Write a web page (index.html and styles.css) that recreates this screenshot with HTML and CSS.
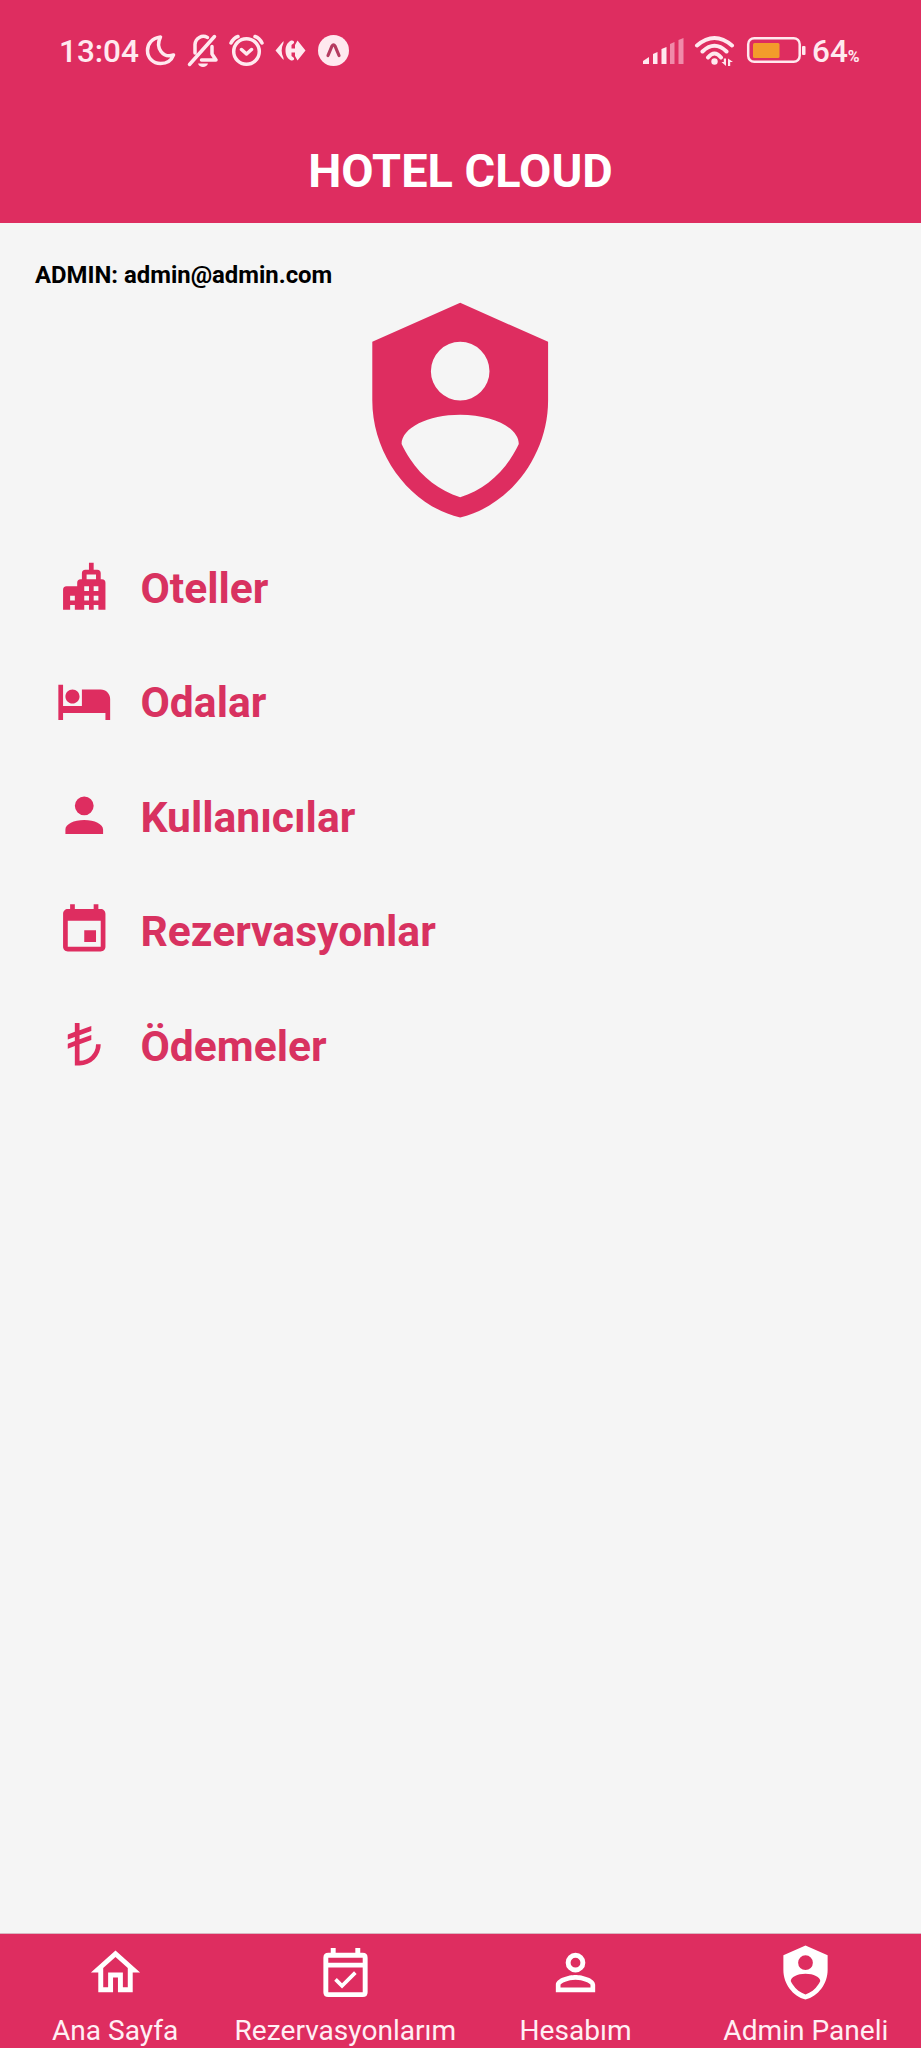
FILE: index.html
```html
<!DOCTYPE html>
<html lang="tr">
<head>
<meta charset="utf-8">
<title>Hotel Cloud</title>
<link rel="stylesheet" href="styles.css">
</head>
<body>
<div class="app">
  <header class="header">
    <div class="status">
      <div class="status-left">
        <span class="time">13:04</span>
        <svg width="210" height="40" viewBox="142 30 210 40">
          <path class="line" d="M160.500 37C152 38 147.500 44 147.500 50.500C147.500 58 153 63.500 160.500 63.500C166.500 63.500 171.500 60.500 173.500 55C163 58.500 155 48 160.500 37Z"/>
          <path class="line" d="M189.500 64.500L214.500 36.500M207.500 37.500C202 34.500 195.500 38 195 44.500V53M201.500 60H216L212 54V46.500"/>
          <path class="solid" d="M198 63.500H208C207 68 199 68 198 63.500Z"/>
          <circle class="line" cx="246.500" cy="51.500" r="12.800"/>
          <path class="line" d="M241.500 49.500L246.500 54L251.500 49.500M231 43C232.500 40 235 37.500 238 36.500M262 43C260.500 40 258 37.500 255 36.500"/>
          <path class="solid" d="M283.500 41L275.500 50.500L283.500 60V58C281 53 281 48 283.500 43Z"/>
          <path class="solid" d="M291 40.500C286.500 43 285.500 47 285.500 50.500C285.500 54 286.500 58 291 60.500C293.500 61 294.500 59.500 294 58L291.500 56V52.500H295V56L297.500 60.500L305.500 50.500L297.500 40.500L295 45V48.500H291.500V45L294 43C294.500 41.500 293.500 40 291 40.500Z"/>
          <circle class="solid" cx="333.500" cy="50.500" r="15.500"/>
          <path class="expo" d="M328 55.500L332 46Q333.500 43.500 335 46L339 55.500"/>
        </svg>
      </div>
      <div class="status-right">
        <svg width="170" height="40" viewBox="640 30 170 40">
          <path class="solid" d="M644 64V61L650 57V64ZM654 64V54L658.500 52V64ZM662.500 64V49L667.500 47V64Z"/>
          <path class="dim" d="M671 64V44L675.500 42V64ZM679.500 64V40L684.500 38V64Z"/>
          <path class="wifi" d="M698 45.500Q715.500 30.500 733 45.500M703.500 51.500Q715.500 40 727.500 51.500M709 57.500Q715.500 49.500 722 57.500"/>
          <circle class="solid" cx="715.500" cy="61.500" r="3.200"/>
          <path class="solid" d="M727 58.500V66L722.500 62H724.800V58.500ZM729 58.500L734 62H731.200V66H729Z"/>
          <rect class="battery" x="749.200" y="38.200" width="51.500" height="23.600" rx="6"/>
          <rect class="charge" x="754" y="43" width="26.500" height="15" rx="1.500"/>
          <rect class="solid" x="803" y="46" width="3.500" height="9" rx="1"/>
        </svg>
        <span class="percent">64<small class="unit">%</small></span>
      </div>
    </div>
    <h1 class="title">HOTEL CLOUD</h1>
  </header>

  <main class="content">
    <p class="admin">ADMIN: admin@admin.com</p>
    <svg class="shield" viewBox="0 0 24 24"><path d="M12,1L3,5V11C3,16.55 6.84,21.74 12,23C17.16,21.74 21,16.55 21,11V5L12,1M12,5A3,3 0 0,1 15,8A3,3 0 0,1 12,11A3,3 0 0,1 9,8A3,3 0 0,1 12,5M17.13,17C15.92,18.85 14.11,20.24 12,20.92C9.89,20.24 8.08,18.85 6.87,17C6.53,16.5 6.24,16 6,15.47C6,13.82 8.71,12.47 12,12.47C15.29,12.47 18,13.79 18,15.47C17.76,16 17.47,16.5 17.13,17Z"/></svg>
    <nav class="menu">
      <a class="item"><svg class="icon" viewBox="0 0 24 24"><path fill-rule="evenodd" d="M14 2H16V5H17.500Q19 5 19 6.500V9H19.500Q21 9 21 10.500V22H18V20H16V22H14V20H12V22H8V20H6V22H3V13.500Q3 12 4.500 12H9V10.500Q9 9 10.500 9H11V6.500Q11 5 12.500 5H14ZM13 7V9H17V7ZM12 12V14H14V12ZM16 12V14H18V12ZM12 16V18H14V16ZM16 16V18H18V16ZM6 16V18H8V16Z"/></svg><span>Oteller</span></a>
      <a class="item"><svg class="icon" viewBox="0 0 24 24"><path d="M7 13c1.660 0 3-1.340 3-3S8.660 7 7 7s-3 1.340-3 3 1.340 3 3 3zm12-6h-8v7H3V5H1v15h2v-3h18v3h2v-9c0-2.210-1.790-4-4-4z"/></svg><span>Odalar</span></a>
      <a class="item"><svg class="icon" viewBox="0 0 24 24"><path d="M12,4A4,4 0 0,1 16,8A4,4 0 0,1 12,12A4,4 0 0,1 8,8A4,4 0 0,1 12,4M12,14C16.42,14 20,15.79 20,18V20H4V18C4,15.79 7.58,14 12,14Z"/></svg><span>Kullanıcılar</span></a>
      <a class="item"><svg class="icon" viewBox="0 0 24 24"><path d="M17 12h-5v5h5v-5zM16 1v2H8V1H6v2H5c-1.110 0-1.990.9-1.990 2L3 19c0 1.100.89 2 2 2h14c1.100 0 2-.9 2-2V5c0-1.100-.9-2-2-2h-1V1h-2zm3 18H5V8h14v11z"/></svg><span>Rezervasyonlar</span></a>
      <a class="item"><svg class="icon" viewBox="0 0 24 24"><path d="M19,12A9,9 0 0,1 10,21H8V12.77L5,13.87V11.74L8,10.64V8.87L5,9.96V7.84L8,6.74V3H10V6L15,4.2V6.32L10,8.14V9.92L15,8.1V10.23L10,12.05V19A7,7 0 0,0 17,12H19Z"/></svg><span>Ödemeler</span></a>
    </nav>
  </main>

  <nav class="tabs">
    <a class="tab"><svg class="tab-icon" viewBox="0 0 24 24"><path d="M12 5.690L17 10.190V18H15V12H9V18H7V10.190L12 5.690M12 3L2 12H5V20H11V14H13V20H19V12H22L12 3Z"/></svg><span>Ana Sayfa</span></a>
    <a class="tab"><svg class="tab-icon" viewBox="0 0 24 24"><path fill-rule="evenodd" d="M6 2H8V4H16V2H18V4H19Q21 4 21 6V20Q21 22 19 22H5Q3 22 3 20V6Q3 4 5 4H6ZM5 6V8H19V6ZM5 10V20H19V10ZM16.530 12.560L15.470 11.500L10.590 16.380L8.470 14.260L7.410 15.320L10.590 18.500Z"/></svg><span>Rezervasyonlarım</span></a>
    <a class="tab"><svg class="tab-icon" viewBox="0 0 24 24"><path d="M12,4A4,4 0 0,1 16,8A4,4 0 0,1 12,12A4,4 0 0,1 8,8A4,4 0 0,1 12,4M12,6A2,2 0 0,0 10,8A2,2 0 0,0 12,10A2,2 0 0,0 14,8A2,2 0 0,0 12,6M12,13C14.67,13 20,14.33 20,17V20H4V17C4,14.33 9.33,13 12,13M12,14.9C9.03,14.9 5.9,16.36 5.9,17V18.1H18.1V17C18.1,16.36 14.97,14.9 12,14.9Z"/></svg><span>Hesabım</span></a>
    <a class="tab"><svg class="tab-icon" viewBox="0 0 24 24"><path d="M12,1L3,5V11C3,16.55 6.84,21.74 12,23C17.16,21.74 21,16.55 21,11V5L12,1M12,5A3,3 0 0,1 15,8A3,3 0 0,1 12,11A3,3 0 0,1 9,8A3,3 0 0,1 12,5M17.13,17C15.92,18.85 14.11,20.24 12,20.92C9.89,20.24 8.08,18.85 6.87,17C6.53,16.5 6.24,16 6,15.47C6,13.82 8.71,12.47 12,12.47C15.29,12.47 18,13.79 18,15.47C17.76,16 17.47,16.5 17.13,17Z"/></svg><span>Admin Paneli</span></a>
  </nav>
</div>
</body>
</html>
```
FILE: styles.css
```css
* { box-sizing: border-box; }
body { margin: 0; font-family: Roboto, "Liberation Sans", sans-serif; background: #f5f5f5; }
svg { display: block; flex: none; }
.app { display: flex; flex-direction: column; height: 2048px; overflow: hidden; }

.header { height: 222.500px; background: #de2d60; flex: none; }
.status { display: flex; justify-content: space-between; height: 100px; padding: 30px 60px 0 59px; color: #ffe9ef; }
.status-left, .status-right { display: flex; align-items: flex-start; height: 40px; }
.time { width: 83px; font-size: 31.5px; line-height: 43px; font-weight: 500; white-space: nowrap; }
.percent { width: 52px; padding-left: 3px; font-size: 31.5px; line-height: 43px; font-weight: 500; white-space: nowrap; }
.unit { font-size: 16px; font-weight: 700; }
.line { fill: none; stroke: #ffe9ef; stroke-width: 3.500; stroke-linecap: round; stroke-linejoin: round; }
.solid { fill: #ffe9ef; }
.dim { fill: #f08aa9; }
.expo { fill: none; stroke: #b53c60; stroke-width: 3.200; stroke-linecap: round; }
.wifi { fill: none; stroke: #ffe9ef; stroke-width: 4; stroke-linecap: round; }
.battery { fill: none; stroke: #ffe9ef; stroke-width: 2.500; }
.charge { fill: #f39c2b; }
.title { margin: 0; padding-top: 43px; font-size: 46.900px; line-height: 56px; font-weight: 700; text-align: center; color: #fff; }

.content { flex: 1; padding-top: 38.500px; }
.admin { margin: 0 0 4px 35px; font-size: 23.900px; line-height: 28px; font-weight: 700; color: #000; }
.shield { width: 234.400px; height: 234.400px; margin: 0 auto; fill: #de2d60; }
.menu { margin-top: 2px; padding-left: 56px; }
.item { display: flex; align-items: center; height: 114.400px; gap: 28px; font-size: 42.600px; line-height: 52px; font-weight: 700; color: #d83260; }
.icon { width: 56.500px; height: 56.500px; fill: #de2d60; }
.item span { padding-top: 3px; }

.tabs { display: grid; grid-template-columns: repeat(4, 1fr); height: 115px; flex: none; background: #de2d60; border-top: 1px solid #d9b7c1; }
.tab { display: flex; flex-direction: column; align-items: center; padding-top: 8.500px; font-size: 28.100px; line-height: 34px; color: #ffeff4; white-space: nowrap; }
.tab-icon { width: 59px; height: 59px; margin-bottom: 12.500px; fill: #fff; }
```
